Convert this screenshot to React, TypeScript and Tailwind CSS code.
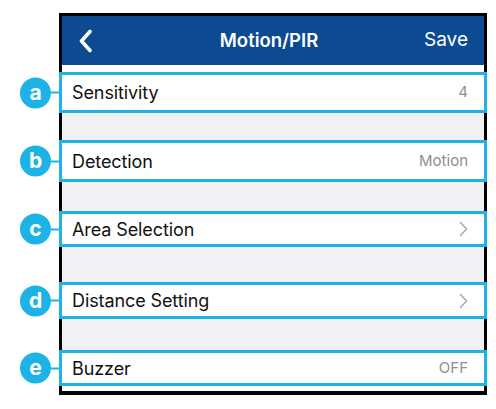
import React from 'react';

type Row = {
  tag: string;
  label: string;
  value?: string;
  chevron?: boolean;
  h: string;
};

const rows: Row[] = [
  { tag: 'a', label: 'Sensitivity', value: '4', h: 'h-[41px]' },
  { tag: 'b', label: 'Detection', value: 'Motion', h: 'h-[42px]' },
  { tag: 'c', label: 'Area Selection', chevron: true, h: 'h-[36px]' },
  { tag: 'd', label: 'Distance Setting', chevron: true, h: 'h-[37px]' },
  { tag: 'e', label: 'Buzzer', value: 'OFF', h: 'h-[36px]' },
];

const gaps = ['h-[27px]', 'h-[29px]', 'h-[35px]', 'h-[31px]'];

function Chevron() {
  return (
    <svg width="9" height="16" viewBox="0 0 9 16" fill="none">
      <path d="M1.5 1.5 L7.5 8 L1.5 14.5" stroke="#a9a9ae" strokeWidth="1.6" strokeLinecap="round" strokeLinejoin="round" />
    </svg>
  );
}

function SettingRow({ row }: { row: Row }) {
  return (
    <div className={`relative -mx-[3px] ${row.h} bg-white border-[3px] border-[#1db3e6] flex items-center justify-between pl-[10px] pr-[16px]`}>
      <div className="absolute left-[-42px] top-1/2 -translate-y-1/2 flex items-center">
        <div className="w-[31px] h-[31px] rounded-full bg-[#1db3e6] flex items-center justify-center text-white text-[21px] font-bold leading-none pb-[2px]">
          {row.tag}
        </div>
        <div className="w-[9px] h-[2px] bg-[#1db3e6]" />
      </div>
      <span className="text-[18px] text-[#111] tracking-[-0.1px]">{row.label}</span>
      {row.value && <span className="text-[15px] text-[#8e8e93]">{row.value}</span>}
      {row.chevron && <Chevron />}
    </div>
  );
}

export default function App() {
  return (
    <div className="w-[496px] h-[409px] bg-white pt-[13px] font-['Inter',sans-serif]">
      <div className="ml-[59px] w-[428px] border-x-[3px] border-t-[3px] border-b-4 border-black bg-[#f0f0f5]">
        <div className="h-[49px] bg-[#0c4a91] flex items-center justify-between px-[16px] text-white">
          <svg width="16" height="24" viewBox="0 0 16 24" fill="none">
            <path d="M12 2.5 L3.5 12 L12 21.5" stroke="white" strokeWidth="3.6" strokeLinecap="round" strokeLinejoin="round" />
          </svg>
          <span className="text-[18.5px] font-semibold pl-[20px]">Motion/PIR</span>
          <span className="text-[19px]">Save</span>
        </div>
        <div className="h-[7px] bg-white" />
        {rows.map((row, i) => (
          <React.Fragment key={row.tag}>
            <SettingRow row={row} />
            {i < gaps.length && <div className={gaps[i]} />}
          </React.Fragment>
        ))}
        <div className="h-[5px] bg-white" />
      </div>
    </div>
  );
}
